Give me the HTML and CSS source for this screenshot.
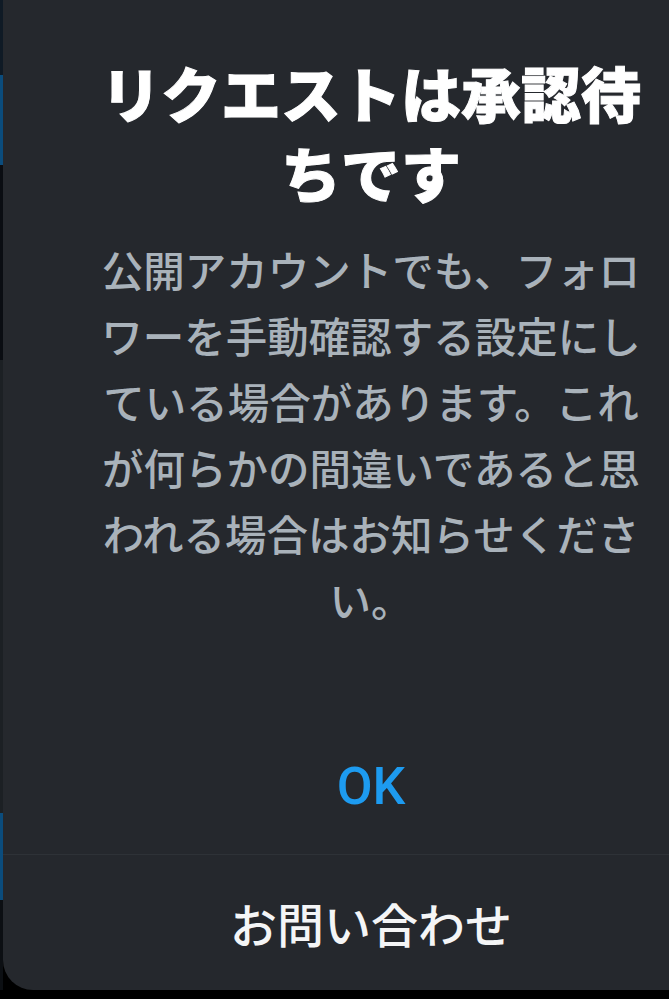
FILE: index.html
```html
<!DOCTYPE html>
<html lang="ja">
<head>
<meta charset="utf-8">
<title>リクエストは承認待ちです</title>
<link rel="stylesheet" href="styles.css">
</head>
<body>
<div class="screen">
  <div class="backdrop">
    <span class="seg seg-dark"></span>
    <span class="seg seg-blue"></span>
    <span class="seg seg-black"></span>
    <span class="seg seg-gray"></span>
    <span class="seg seg-blue2"></span>
    <span class="seg seg-dark2"></span>
  </div>
  <div class="dialog" role="dialog">
    <div class="dialog-body">
      <h1 class="dialog-title">リクエストは承認待ちです</h1>
      <p class="dialog-text">公開アカウントでも、フォロワーを手動確認する設定にしている場合があります。これが何らかの間違いであると思われる場合はお知らせください。</p>
    </div>
    <div class="dialog-actions">
      <button class="action action-ok" type="button">OK</button>
      <button class="action action-contact" type="button">お問い合わせ</button>
    </div>
  </div>
</div>
</body>
</html>
```

FILE: styles.css
```css
html, body {
  margin: 0;
  padding: 0;
  background: #000;
  overflow: hidden;
}

.screen {
  display: flex;
  width: 669px;
  height: 990px;
}

/* thin sliver of the page behind the dialog */
.backdrop {
  width: 3px;
  flex: none;
  display: flex;
  flex-direction: column;
}
.seg { display: block; }
.seg-dark  { height: 75px;  background: #0f1a25; }
.seg-blue  { height: 90px;  background: #0b4c7c; }
.seg-black { height: 195px; background: #0a0d12; }
.seg-gray  { height: 453px; background: #1c2024; }
.seg-blue2 { height: 87px;  background: #0b4c7c; }
.seg-dark2 { flex: 1;       background: #0c0f13; }

.dialog {
  flex: 1;
  display: flex;
  flex-direction: column;
  background: #25282d;
  border-radius: 0 0 0 30px;
  font-family: "Noto Sans CJK JP", "Noto Sans", sans-serif;
}

.dialog-body {
  flex: 1;
  padding: 52px 20px 0 90px;
}

.dialog-title {
  margin: 0;
  font-size: 60px;
  line-height: 80px;
  font-weight: 900;
  color: #fff;
  text-align: center;
  -webkit-text-stroke: 1px #fff;
}

.dialog-text {
  margin: 24px 0 0;
  font-size: 41.5px;
  line-height: 66px;
  font-weight: 500;
  color: #a9b2ba;
  text-align: center;
}

.dialog-actions {
  display: flex;
  flex-direction: column;
}

.action {
  display: flex;
  align-items: center;
  justify-content: center;
  height: 136px;
  padding: 0 20px 0 90px;
  margin: 0;
  border: 0;
  background: transparent;
  font-family: "Noto Sans CJK JP", "Noto Sans", sans-serif;
}

.action-ok {
  font-family: Roboto, "Noto Sans", sans-serif;
  font-size: 52px;
  font-weight: 500;
  color: #1d9bf0;
}

.action-contact {
  border-top: 1px solid #2e3237;
  font-size: 47px;
  font-weight: 500;
  color: #f4f5f6;
}
```
